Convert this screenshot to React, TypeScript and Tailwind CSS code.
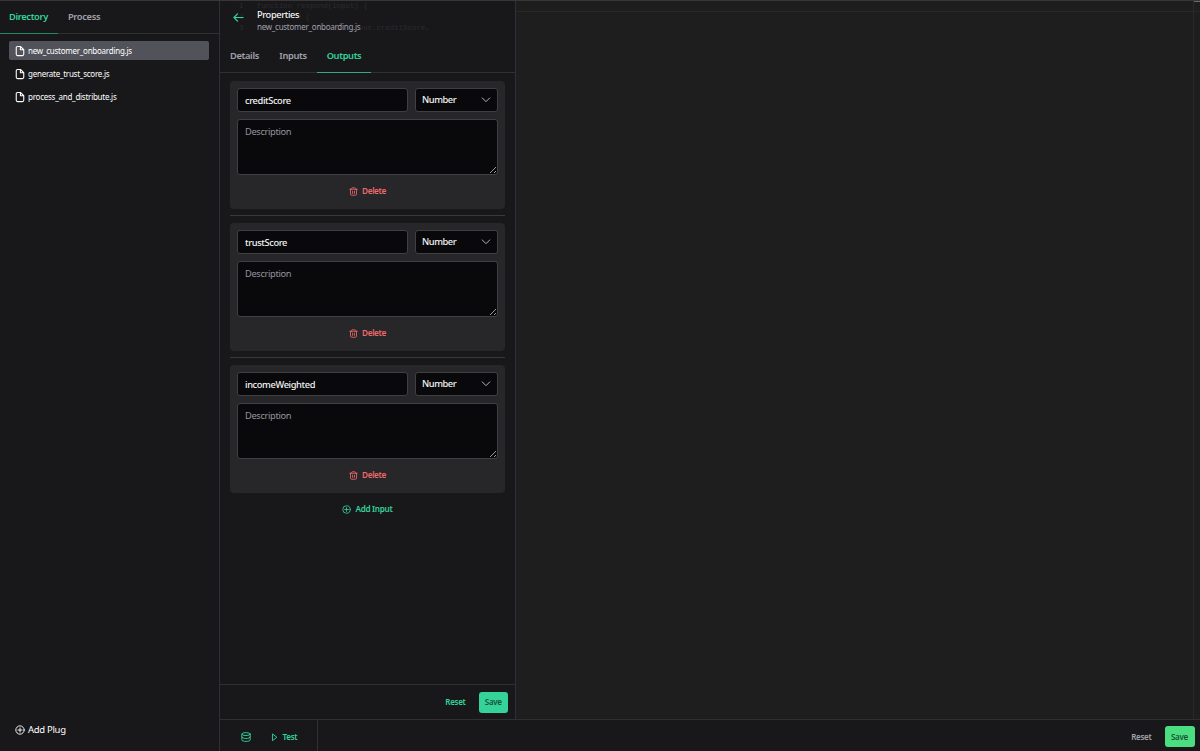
import React, { useState } from 'react';

interface OutputField {
  name: string;
  type: string;
  description: string;
}

const FILES = ['new_customer_onboarding.js', 'generate_trust_score.js', 'process_and_distribute.js'];

const INITIAL_OUTPUTS: OutputField[] = [
  { name: 'creditScore', type: 'Number', description: '' },
  { name: 'trustScore', type: 'Number', description: '' },
  { name: 'incomeWeighted', type: 'Number', description: '' },
];

interface IconProps {
  className?: string;
  children?: React.ReactNode;
}

const Icon: React.FC<IconProps> = ({ className, children }) => (
  <svg viewBox="0 0 24 24" fill="none" stroke="currentColor" strokeWidth="2.2" strokeLinecap="round" strokeLinejoin="round" className={className}>
    {children}
  </svg>
);

const FileIcon = () => (
  <Icon className="w-[10px] h-[10px] shrink-0 overflow-visible">
    <path d="M13 1v8h8M13 1H6a3 3 0 0 0-3 3v16a3 3 0 0 0 3 3h12a3 3 0 0 0 3-3V9z" strokeWidth="2.6" />
  </Icon>
);

const TrashIcon = () => (
  <Icon className="w-[9px] h-[9px] shrink-0">
    <path d="M2 6h20M7 6V4a2 2 0 0 1 2-2h6a2 2 0 0 1 2 2v2M4 6v13a3 3 0 0 0 3 3h10a3 3 0 0 0 3-3V6M9.500 11v6M14.500 11v6" />
  </Icon>
);

const PlusCircleIcon: React.FC<IconProps> = ({ className }) => (
  <Icon className={className}>
    <circle cx="12" cy="12" r="10" />
    <path d="M12 7v10M7 12h10" />
  </Icon>
);

const DatabaseIcon = () => (
  <Icon className="w-[10px] h-[10px] shrink-0">
    <ellipse cx="12" cy="5" rx="10" ry="3.500" />
    <path d="M2 5v14c0 2 4 3.500 10 3.500s10-1.500 10-3.500V5M2 12c0 2 4 3.500 10 3.500s10-1.500 10-3.500" />
  </Icon>
);

const Directory = () => {
  const [selected, setSelected] = useState(FILES[0]);

  return (
    <aside className="w-[220px] shrink-0 flex flex-col border-r border-[#303034] bg-[#18181b]">
      <div className="h-[33px] flex border-b border-[#303034] text-[9.3px] tracking-[-0.35px] font-semibold">
        <button className="w-[58px] h-[33px] pl-[9px] text-left text-[#34d399] border-b border-[#22895f]">Directory</button>
        <button className="pl-[10px] text-[#a1a1aa]">Process</button>
      </div>
      <div className="flex-1 flex flex-col gap-1 pt-[7px] pl-[9px] pr-[10px]">
        {FILES.map(file => (
          <button
            key={file}
            onClick={() => setSelected(file)}
            className={`h-[19px] flex items-center gap-[3px] pl-[6px] pt-px rounded-[2px] text-[8px] tracking-[-0.25px] text-white ${
              file === selected ? 'bg-[#52525b]' : ''
            }`}
          >
            <FileIcon />
            {file}
          </button>
        ))}
      </div>
      <button className="h-[42px] flex items-center gap-[3px] pl-[15px] text-[9.5px] tracking-[-0.3px] text-white">
        <PlusCircleIcon className="w-[10px] h-[10px]" />
        Add Plug
      </button>
    </aside>
  );
};

interface OutputCardProps {
  field: OutputField;
  onChange: (field: OutputField) => void;
  onDelete: () => void;
}

const OutputCard: React.FC<OutputCardProps> = ({ field, onChange, onDelete }) => (
  <div className="h-[127.500px] px-[7px] pt-[7px] rounded-[4px] bg-[#27272a]">
    <div className="flex gap-[7px]">
      <input
        value={field.name}
        onChange={e => onChange({ ...field, name: e.target.value })}
        className="w-[170.500px] h-[24px] px-[7px] rounded-[3px] border border-[#3f3f46] bg-[#09090b] text-[9.3px] tracking-[-0.38px] font-medium text-[#f4f4f5]"
      />
      <button className="flex-1 h-[24px] flex items-center justify-between pl-[6.500px] pr-[6px] rounded-[3px] border border-[#3f3f46] bg-[#09090b] text-[9.3px] tracking-[-0.45px] font-medium text-[#f4f4f5]">
        {field.type}
        <Icon className="w-[10px] h-[10px] text-[#c4c4ca]">
          <path d="M3 7l9 9 9-9" />
        </Icon>
      </button>
    </div>
    <textarea
      value={field.description}
      placeholder="Description"
      onChange={e => onChange({ ...field, description: e.target.value })}
      className="block w-full h-[56px] mt-[7px] px-[7px] py-[5px] rounded-[3px] border border-[#3f3f46] bg-[#09090b] text-[9.3px] tracking-[-0.35px] text-[#f4f4f5] placeholder:text-[#94949d]"
    />
    <button onClick={onDelete} className="mx-auto mt-[8.500px] h-4 flex items-center gap-[4px] text-[8.2px] tracking-[-0.35px] font-semibold text-[#f0696a]">
      <TrashIcon />
      Delete
    </button>
  </div>
);

const PropertiesPanel = () => {
  const [outputs, setOutputs] = useState<OutputField[]>(INITIAL_OUTPUTS);

  const updateField = (index: number, field: OutputField) => {
    setOutputs(outputs.map((o, i) => (i === index ? field : o)));
  };

  return (
    <section className="w-[296px] shrink-0 flex flex-col border-r border-[#303034] bg-[#18181b]">
      <header className="relative h-[39px] flex pl-[13px] pt-[7px]">
        {/* Script editor showing faintly through the header */}
        <pre className="absolute left-[19px] top-0 h-[39px] overflow-hidden font-['Liberation_Mono',monospace] text-[7.4px] leading-[11px] text-[#2b2b2d]">
          {'1   function respond(input) {\n2       return {\n3           creditScore: input.creditScore,'}
        </pre>
        <Icon className="relative w-[11px] h-[11px] mt-[4px] text-[#34d399]">
          <path d="M22 12H3M10 4l-8 8 8 8" strokeWidth="2.6" />
        </Icon>
        <div className="relative ml-[13px]">
          <h1 className="w-fit bg-[#18181b] text-[9.3px] leading-[13px] tracking-[-0.4px] font-medium text-[#f4f4f5]">Properties</h1>
          <p className="w-fit bg-[#18181b] text-[8px] leading-[12px] tracking-[-0.27px] text-[#a1a1aa]">new_customer_onboarding.js</p>
        </div>
      </header>
      <nav className="h-[33px] flex border-b border-[#303034] text-[9.3px] tracking-[-0.35px] font-semibold text-[#a1a1aa]">
        <button className="w-[49px] h-[32px]">Details</button>
        <button className="w-[48px] h-[32px]">Inputs</button>
        <button className="w-[54px] h-[33px] border-b border-[#34a97d] text-[#34d399]">Outputs</button>
      </nav>
      <div className="flex-1 pt-[8px] pl-[10px] pr-[10px]">
        {outputs.map((field, i) => (
          <React.Fragment key={i}>
            {i > 0 && <hr className="mt-[6.500px] mb-[7px] border-[#38383d]" />}
            <OutputCard
              field={field}
              onChange={f => updateField(i, f)}
              onDelete={() => setOutputs(outputs.filter((_, j) => j !== i))}
            />
          </React.Fragment>
        ))}
        <button
          onClick={() => setOutputs([...outputs, { name: '', type: 'Number', description: '' }])}
          className="mx-auto mt-[9px] h-4 flex items-center gap-[4px] text-[8.2px] tracking-[-0.3px] font-semibold text-[#34d399]"
        >
          <PlusCircleIcon className="w-[9px] h-[9px]" />
          Add Input
        </button>
      </div>
      <footer className="h-[35px] flex items-center justify-end gap-[13px] pr-[7px] border-t border-[#303034] text-[8px] tracking-[-0.3px] font-semibold">
        <button className="text-[#34d399]">Reset</button>
        <button className="w-[29.500px] h-[21px] rounded-[3px] bg-[#34d399] text-[#18513d]">Save</button>
      </footer>
    </section>
  );
};

const App = () => (
  <div className="w-[1200px] h-[751px] flex overflow-hidden border-t border-[#3a3638] bg-[#18181b] font-['Noto_Sans',sans-serif]">
    <Directory />
    <div className="flex-1 flex flex-col">
      <div className="flex-1 flex">
        <PropertiesPanel />
        <div className="flex-1 flex bg-[#1e1e1e]">
          <div className="flex-1 border-r border-[#292929]">
            <div className="h-[11px] border-b border-[#282828]" />
          </div>
          <div className="w-[6px]">
            <div className="h-px bg-[#6b6b6b]" />
            <div className="h-[10px] border-b border-[#282828]" />
          </div>
        </div>
      </div>
      <footer className="h-[32px] flex items-center border-t border-[#303034] text-[8px] tracking-[-0.27px] font-semibold">
        <div className="w-[98px] h-full flex items-center gap-[20px] pl-[20.500px] pt-[2px] border-r border-[#303034] text-[#34d399]">
          <DatabaseIcon />
          <button className="flex items-center gap-[5px] pt-px">
            <Icon className="w-[7px] h-[9px] overflow-visible">
              <path d="M5 1v22L19 12z" strokeWidth="3.200" />
            </Icon>
            Test
          </button>
        </div>
        <div className="ml-auto flex items-center gap-[13px] pr-[5.500px] pt-[2px]">
          <button className="text-[#a1a1aa]">Reset</button>
          <button className="w-[30px] h-[21px] rounded-[3px] bg-[#4ade80] text-[#1c5233]">Save</button>
        </div>
      </footer>
    </div>
  </div>
);

export default App;
